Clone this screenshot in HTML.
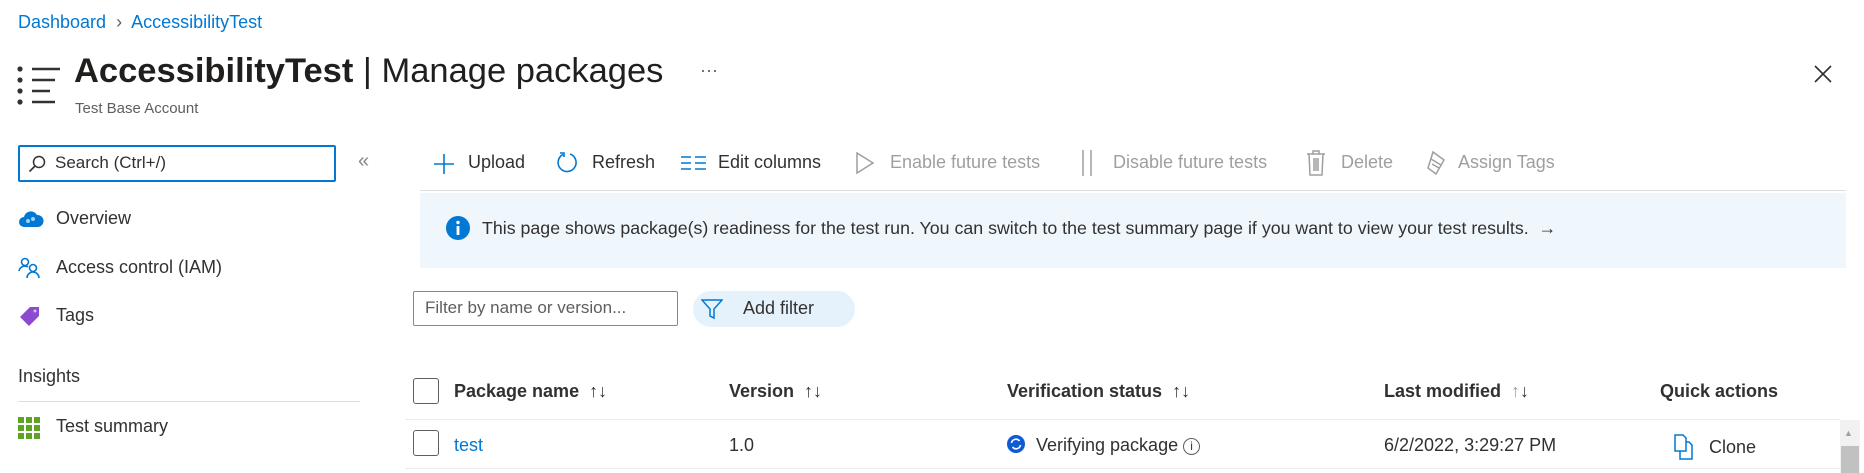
<!DOCTYPE html>
<html><head><meta charset="utf-8"><style>
*{margin:0;padding:0;box-sizing:border-box}
body{width:1864px;height:473px;overflow:hidden;background:#fff;font-family:"Liberation Sans",sans-serif;color:#323130;position:relative}
.a{position:absolute;white-space:nowrap}
.blue{color:#0078d4}
.tb{font-size:18px;top:152px}
.dis{color:#a19f9d}
.th{font-size:18px;font-weight:bold;top:381px;color:#323130}
.cb{position:absolute;width:26px;height:26px;border:1.5px solid #605e5c;border-radius:3px}
.nav{font-size:18px}
</style></head><body>
<div class="a blue" style="left:18px;top:12px;font-size:18px">Dashboard <span style="color:#605e5c">&nbsp;›&nbsp;</span> AccessibilityTest</div>

<svg class="a" style="left:14px;top:64px" width="50" height="44">
<circle cx="6" cy="5" r="2.6" fill="#323130"/><circle cx="6" cy="16" r="2.6" fill="#323130"/><circle cx="6" cy="27" r="2.6" fill="#323130"/><circle cx="6" cy="38" r="2.6" fill="#323130"/>
<g stroke="#323130" stroke-width="2.4"><line x1="18" y1="5" x2="46" y2="5"/><line x1="18" y1="16" x2="41" y2="16"/><line x1="18" y1="27" x2="36" y2="27"/><line x1="18" y1="38" x2="41" y2="38"/></g></svg>
<div class="a" style="left:74px;top:52px;font-size:34.5px;color:#201f1e"><b>AccessibilityTest</b> | Manage packages</div>
<div class="a" style="left:700px;top:60px;font-size:18px;color:#605e5c">···</div>
<div class="a" style="left:75px;top:100px;font-size:15px;color:#605e5c">Test Base Account</div>
<svg class="a" style="left:1813px;top:64px" width="20" height="20"><path d="M2 2L18 18M18 2L2 18" stroke="#323130" stroke-width="1.6"/></svg>

<div class="a" style="left:18px;top:145px;width:318px;height:37px;border:2px solid #0078d4;border-radius:2px"></div>
<svg class="a" style="left:28px;top:155px" width="18" height="18"><circle cx="11" cy="7" r="5.5" fill="none" stroke="#323130" stroke-width="1.5"/><path d="M7 11L1.5 16.5" stroke="#323130" stroke-width="1.6"/></svg>
<div class="a" style="left:55px;top:153px;font-size:17px">Search (Ctrl+/)</div>
<div class="a" style="left:358px;top:150px;font-size:20px;color:#8a8886">«</div>

<svg class="a" style="left:18px;top:209px" width="26" height="20"><path d="M6 18a5 5 0 0 1 0-10a7 7 0 0 1 13-2a5.5 5.5 0 0 1 1 12z" fill="#0078d4"/><circle cx="10" cy="12" r="2" fill="#9fd0f5"/><circle cx="15" cy="10" r="2" fill="#9fd0f5"/></svg>
<div class="a nav" style="left:56px;top:208px">Overview</div>
<svg class="a" style="left:18px;top:257px" width="26" height="22" fill="none" stroke="#0078d4" stroke-width="1.6"><circle cx="7" cy="5" r="3.5"/><path d="M1 14a6 6 0 0 1 9-4"/><circle cx="15" cy="11" r="3.5"/><path d="M9 21a6 6 0 0 1 12 0"/></svg>
<div class="a nav" style="left:56px;top:257px">Access control (IAM)</div>
<svg class="a" style="left:18px;top:305px" width="24" height="24"><path d="M12 2h9v9l-10 10l-9-9z" fill="#8c4ad1"/><circle cx="17" cy="6" r="1.5" fill="#d6c0f0"/></svg>
<div class="a nav" style="left:56px;top:305px">Tags</div>
<div class="a nav" style="left:18px;top:366px">Insights</div>
<div class="a" style="left:18px;top:401px;width:342px;height:1px;background:#e1dfdd"></div>
<svg class="a" style="left:18px;top:417px" width="22" height="22"><g fill="#5ea326"><rect x="0" y="0" width="6" height="6"/><rect x="8" y="0" width="6" height="6"/><rect x="16" y="0" width="6" height="6"/><rect x="0" y="8" width="6" height="6"/><rect x="8" y="8" width="6" height="6"/><rect x="16" y="8" width="6" height="6"/><rect x="0" y="16" width="6" height="6"/><rect x="8" y="16" width="6" height="6"/><rect x="16" y="16" width="6" height="6"/></g></svg>
<div class="a nav" style="left:56px;top:416px">Test summary</div>

<svg class="a" style="left:433px;top:153px" width="22" height="22"><path d="M11 1v20M1 11h20" stroke="#0078d4" stroke-width="1.6"/></svg>
<div class="a tb" style="left:468px">Upload</div>
<svg class="a" style="left:555px;top:151px" width="24" height="24"><path d="M8 3.5A9 9 0 1 0 15 3" fill="none" stroke="#0078d4" stroke-width="1.6"/><path d="M5 2h4v4" fill="none" stroke="#0078d4" stroke-width="1.6"/></svg>
<div class="a tb" style="left:592px">Refresh</div>
<svg class="a" style="left:681px;top:155px" width="26" height="16" stroke="#0078d4" stroke-width="1.6"><path d="M0 2h10M0 8h10M0 14h10M14 2h11M14 8h11M14 14h11"/></svg>
<div class="a tb" style="left:718px">Edit columns</div>
<svg class="a" style="left:855px;top:152px" width="20" height="22"><path d="M2 1L18 11L2 21z" fill="none" stroke="#a19f9d" stroke-width="1.5"/></svg>
<div class="a tb dis" style="left:890px">Enable future tests</div>
<svg class="a" style="left:1080px;top:150px" width="14" height="26"><path d="M3 0v26M11 0v26" stroke="#a19f9d" stroke-width="1.5"/></svg>
<div class="a tb dis" style="left:1113px">Disable future tests</div>
<svg class="a" style="left:1306px;top:150px" width="20" height="26" fill="none" stroke="#a19f9d" stroke-width="1.5"><path d="M1 4h18M7 4V1h6v3M3 4l1 21h12l1-21M8 8v13M10 8v13M12 8v13"/></svg>
<div class="a tb dis" style="left:1341px">Delete</div>
<svg class="a" style="left:1425px;top:150px" width="22" height="26" fill="none" stroke="#a19f9d" stroke-width="1.5"><path d="M8 2l11 8l-8 14l-8-6z"/><path d="M6 9l10 6M7 14l7 4"/></svg>
<div class="a tb dis" style="left:1458px">Assign Tags</div>
<div class="a" style="left:420px;top:190px;width:1426px;height:1px;background:#e1dfdd"></div>

<div class="a" style="left:420px;top:193px;width:1426px;height:75px;background:#eff6fc"></div>
<svg class="a" style="left:446px;top:216px" width="24" height="24"><circle cx="12" cy="12" r="12" fill="#0078d4"/><rect x="10.6" y="10" width="2.8" height="9" fill="#fff"/><circle cx="12" cy="6.5" r="1.7" fill="#fff"/></svg>
<div class="a" style="left:482px;top:218px;font-size:17.8px">This page shows package(s) readiness for the test run. You can switch to the test summary page if you want to view your test results. &nbsp;→</div>

<div class="a" style="left:413px;top:291px;width:265px;height:35px;border:1px solid #8a8886;border-radius:2px"></div>
<div class="a" style="left:425px;top:298px;font-size:17px;color:#605e5c">Filter by name or version...</div>
<div class="a" style="left:693px;top:291px;width:162px;height:36px;background:#e6f2fb;border-radius:18px"></div>
<svg class="a" style="left:701px;top:298px" width="22" height="22"><path d="M1 2h20l-8 9v9l-4-2v-7z" fill="none" stroke="#0078d4" stroke-width="1.5"/></svg>
<div class="a" style="left:743px;top:298px;font-size:18px">Add filter</div>

<div class="cb" style="left:413px;top:378px"></div>
<div class="a th" style="left:454px">Package name <span style="font-weight:normal">&nbsp;↑↓</span></div>
<div class="a th" style="left:729px">Version <span style="font-weight:normal">&nbsp;↑↓</span></div>
<div class="a th" style="left:1007px">Verification status <span style="font-weight:normal">&nbsp;↑↓</span></div>
<div class="a th" style="left:1384px">Last modified <span style="font-weight:normal;color:#a19f9d">&nbsp;↑</span><span style="font-weight:normal">↓</span></div>
<div class="a th" style="left:1660px">Quick actions</div>
<div class="a" style="left:405px;top:419px;width:1435px;height:1px;background:#edebe9"></div>
<div class="cb" style="left:413px;top:430px"></div>
<div class="a blue" style="left:454px;top:435px;font-size:18px">test</div>
<div class="a" style="left:729px;top:435px;font-size:18px">1.0</div>
<svg class="a" style="left:1006px;top:434px" width="20" height="20"><circle cx="10" cy="10" r="9" fill="#0f5bd3"/><path d="M5.5 9a4.5 4.5 0 0 1 8-2M14.5 11a4.5 4.5 0 0 1-8 2" fill="none" stroke="#fff" stroke-width="1.6"/></svg>
<div class="a" style="left:1036px;top:435px;font-size:18px">Verifying package <span style="display:inline-block;width:17px;height:17px;border:1px solid #605e5c;border-radius:50%;font-size:12px;text-align:center;line-height:15px;vertical-align:middle">i</span></div>
<div class="a" style="left:1384px;top:435px;font-size:18px">6/2/2022, 3:29:27 PM</div>
<svg class="a" style="left:1673px;top:434px" width="20" height="26" fill="none" stroke="#0078d4" stroke-width="1.5"><path d="M2 1h8l3 3v13H2z"/><path d="M13 8h3l3 3v14H7v-8"/></svg>
<div class="a" style="left:1709px;top:437px;font-size:18px">Clone</div>
<div class="a" style="left:405px;top:468px;width:1435px;height:1px;background:#edebe9"></div>
<div class="a" style="left:1840px;top:420px;width:20px;height:53px;background:#f1f1f1"></div>
<div class="a" style="left:1844px;top:428px;font-size:9px;color:#a0a0a0">▲</div>
<div class="a" style="left:1841px;top:446px;width:18px;height:27px;background:#c1c1c1"></div>
</body></html>
